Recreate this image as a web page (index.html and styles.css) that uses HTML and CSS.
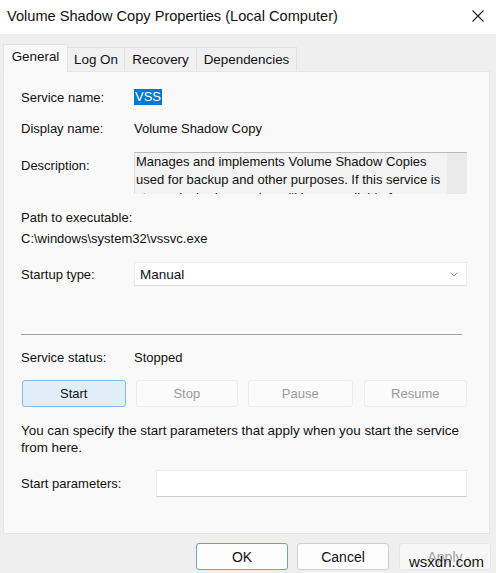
FILE: index.html
```html
<!DOCTYPE html>
<html>
<head>
<meta charset="utf-8">
<link rel="stylesheet" href="styles.css">
</head>
<body>
<div class="window">
  <div class="titlebar">
    <span class="title">Volume Shadow Copy Properties (Local Computer)</span>
    <svg class="close" width="14" height="14" viewBox="0 0 14 14"><path d="M1.5 1.5 L12.5 12.5 M12.5 1.5 L1.5 12.5" stroke="#222" stroke-width="1.1" fill="none"/></svg>
  </div>
  <div class="body">
    <div class="tabs">
      <div class="tab active">General</div>
      <div class="tab t-logon">Log On</div>
      <div class="tab t-recovery">Recovery</div>
      <div class="tab t-dep">Dependencies</div>
    </div>
    <div class="panel">
      <div class="row r1"><span class="lbl">Service name:</span><span class="sel">VSS</span></div>
      <div class="row r2"><span class="lbl">Display name:</span><span>Volume Shadow Copy</span></div>
      <div class="row r3"><span class="lbl lbl-desc">Description:</span>
        <div class="descbox">
          <div class="desctext">
            <div class="dl">Manages and implements Volume Shadow Copies</div>
            <div class="dl">used for backup and other purposes. If this service is</div>
            <div class="dl">stopped, shadow copies will be unavailable for</div>
            <div class="dl">backup and the backup may fail.</div>
          </div>
          <div class="scroll"></div>
        </div>
      </div>
      <div class="path">Path to executable:</div>
      <div class="exe">C:\windows\system32\vssvc.exe</div>
      <div class="row r-startup"><span class="lbl">Startup type:</span>
        <div class="select"><span>Manual</span>
          <svg width="8" height="5" viewBox="0 0 8 5"><path d="M0.5 0.5 L4 4 L7.5 0.5" stroke="#888" stroke-width="0.9" fill="none"/></svg>
        </div>
      </div>
      <div class="sep"></div>
      <div class="row r-status"><span class="lbl">Service status:</span><span>Stopped</span></div>
      <div class="btnrow">
        <div class="btn primary b-start">Start</div>
        <div class="btn disabled b-stop">Stop</div>
        <div class="btn disabled b-pause">Pause</div>
        <div class="btn disabled b-resume">Resume</div>
      </div>
      <div class="note">You can specify the start parameters that apply when you start the service from here.</div>
      <div class="row r-params"><span class="lbl lbl-params">Start parameters:</span><div class="input"></div></div>
    </div>
    <div class="footer">
      <div class="fbtn ok">OK</div>
      <div class="fbtn cancel">Cancel</div>
      <div class="fbtn disabled">Apply</div>
      <span class="watermark">wsxdn.com</span>
    </div>
  </div>
</div>
</body>
</html>
```
FILE: styles.css
```css
html, body { margin: 0; padding: 0; }
body {
  font-family: "Liberation Sans", Arial, sans-serif;
  font-size: 13px;
  color: #111;
  background: #f0f0f0;
}
.window {
  width: 496px;
  height: 573px;
  overflow: hidden;
  background: #efefef;
}
.titlebar {
  height: 34px;
  background: #fff;
  display: flex;
  align-items: center;
  justify-content: space-between;
  padding: 0 11px 0 7px;
}
.title {
  font-size: 14.6px;
  color: #111;
  margin-top: -2px;
}
.close { margin-top: -3px; }
.body {
  padding: 0 5px 0 3px;
  position: relative;
  height: 539px;
}
.tabs {
  display: flex;
  align-items: flex-end;
  height: 37px;
  position: relative;
  z-index: 1;
  font-size: 13.4px;
}
.tab {
  height: 24px;
  line-height: 23px;
  border: 1px solid #e2e2e2;
  border-bottom: none;
  background: #f0f0f0;
  text-align: center;
  box-sizing: border-box;
}
.tab.active {
  height: 28px;
  line-height: 24px;
  width: 65px;
  background: #f9f9f9;
  margin-bottom: -1px;
}
.t-logon { width: 57px; border-left: none; }
.t-recovery { width: 72px; border-left: none; }
.t-dep { width: 100px; border-left: none; }
.panel {
  background: #f9f9f9;
  border: 1px solid #e6e6e6;
  width: 487px;
  height: 463px;
  box-sizing: border-box;
  padding: 15px 22px 0 17px;
}
.row {
  display: flex;
  align-items: center;
}
.lbl {
  width: 113px;
  flex: none;
}
.r1 { height: 20px; }
.sel {
  background: #0078d7;
  color: #fff;
  line-height: 16px;
  padding: 0 1px;
}
.r2 { height: 20px; margin-top: 11px; }
.r3 { margin-top: 14px; align-items: flex-start; }
.lbl-desc { padding-top: 5px; line-height: 18px; }
.descbox {
  display: flex;
  width: 334px;
  height: 42px;
  box-sizing: border-box;
  border-top: 1px solid #b9b9b9;
  border-left: 1px solid #dcdcdc;
  background: #f3f3f3;
  overflow: hidden;
}
.desctext {
  flex: 1;
  min-width: 0;
  overflow: hidden;
  line-height: 18px;
  padding: 0 0 0 1px;
  font-size: 13px;
}
.dl { white-space: nowrap; }
.scroll {
  width: 20px;
  flex: none;
  background: #eaeaea;
}
.path { margin-top: 15px; line-height: 18px; }
.exe { margin-top: 3px; line-height: 18px; }
.r-startup { margin-top: 14px; }
.select {
  width: 334px;
  height: 24px;
  box-sizing: border-box;
  background: #fff;
  border: 1px solid #ececec;
  border-bottom-color: #e0e0e0;
  display: flex;
  align-items: center;
  justify-content: space-between;
  padding: 0 8px 0 5px;
  font-size: 13.5px;
}
.sep {
  margin-top: 48px;
  height: 1px;
  width: 441px;
  background: #a5a5a5;
}
.r-status { margin-top: 13px; height: 18px; }
.btnrow {
  display: flex;
  margin-top: 14px;
  gap: 10px;
}
.btn {
  height: 27px;
  box-sizing: border-box;
  border: 1px solid #ececec;
  border-radius: 3px;
  background: #fbfbfb;
  display: flex;
  align-items: center;
  justify-content: center;
  color: #9a9a9a;
}
.b-start {
  width: 104px;
  background: #e0eefa;
  border-color: #8ab8e4;
  color: #111;
  margin-left: 1px;
}
.b-stop { width: 103px; }
.b-pause { width: 105px; }
.b-resume { width: 104px; margin-left: 1px; }
.note {
  margin-top: 15px;
  line-height: 17px;
  font-size: 13.4px;
  padding-right: 8px;
}
.r-params { margin-top: 14px; }
.lbl-params { width: 135px; }
.input {
  width: 312px;
  height: 27px;
  box-sizing: border-box;
  background: #fff;
  border: 1px solid #ececec;
  border-bottom-color: #cfcfcf;
}
.footer {
  display: flex;
  justify-content: flex-end;
  gap: 9px;
  margin-top: 9px;
  position: relative;
}
.fbtn {
  width: 92px;
  height: 27px;
  box-sizing: border-box;
  border: 1px solid #d0d0d0;
  border-radius: 3px;
  background: #fdfdfd;
  display: flex;
  align-items: center;
  justify-content: center;
  font-size: 14px;
}
.fbtn.ok { border-color: #6a9fd3; }
.fbtn.disabled {
  color: #a0a0a0;
  border-color: #e6e6e6;
  background: #f7f7f7;
  margin-left: 1px;
}
.watermark {
  position: absolute;
  right: 7px;
  top: 10px;
  font-size: 15px;
  color: #111;
  text-shadow: 0 0 2px #fff, 0 0 2px #fff;
}
```
